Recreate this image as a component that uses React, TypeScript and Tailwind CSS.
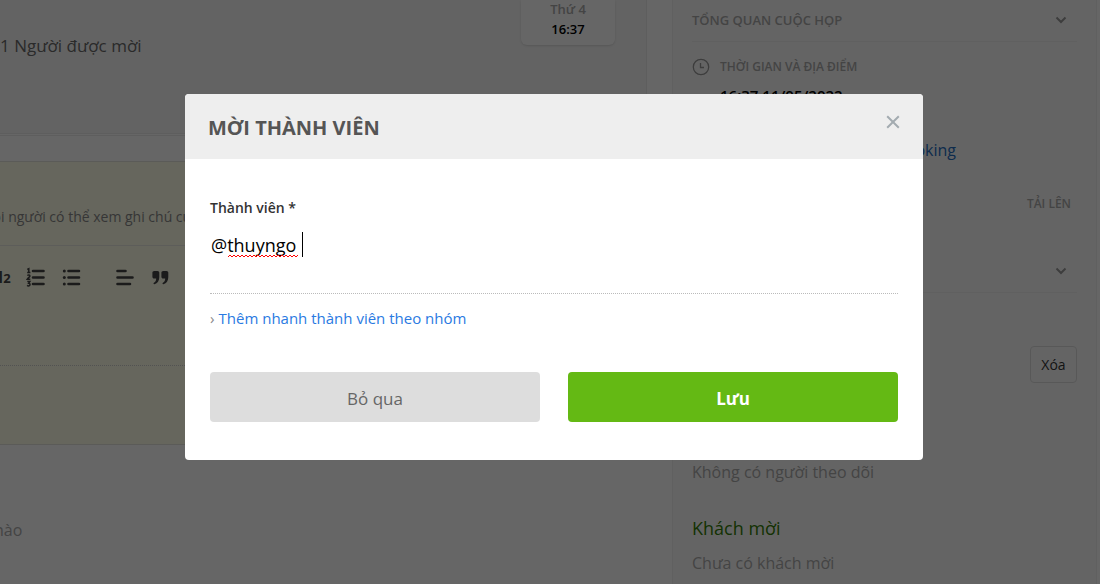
import React, { useState } from "react";

function Chevron() {
  return (
    <svg width="12" height="12" viewBox="0 0 12 12" fill="none" stroke="#999" strokeWidth="2" aria-hidden="true">
      <path d="M1.500 3.500 6 8l4.500-4.500" />
    </svg>
  );
}

function ClockIcon() {
  return (
    <svg width="18" height="18" viewBox="0 0 18 18" fill="none" stroke="#999" strokeWidth="1.300" aria-hidden="true">
      <circle cx="9" cy="9" r="7.700" />
      <path d="M8.500 5v4.500H12" />
    </svg>
  );
}

function NumberedListIcon() {
  return (
    <svg width="20" height="20" viewBox="0 0 20 20" fill="none" stroke="#444" aria-hidden="true">
      <path d="M7 4h10.500M7 10.500h10.500M7 17h10.500" strokeWidth="2.600" strokeLinecap="round" />
      <path
        d="M1.300 2.500 2.800 1.800V5.500M1.200 5.500h3.200M1.300 8.500c1-.8 2.600-.6 2.600.5 0 .9-1.500 1.500-2.600 3.200h3M1.300 14.600h2.500L2.700 16.300c1.800 0 1.800 2.600 0 2.600-.6 0-1.200-.1-1.600-.5"
        strokeWidth="1.500"
      />
    </svg>
  );
}

function BulletListIcon() {
  return (
    <svg width="20" height="20" viewBox="0 0 20 20" fill="#444" stroke="#444" aria-hidden="true">
      <path d="M6.500 4h10.500M6.500 10.500h10.500M6.500 17h10.500" strokeWidth="2.600" strokeLinecap="round" />
      <g stroke="none">
        <circle cx="2.300" cy="4" r="1.500" />
        <circle cx="2.300" cy="10.500" r="1.500" />
        <circle cx="2.300" cy="17" r="1.500" />
      </g>
    </svg>
  );
}

function AlignIcon() {
  return (
    <svg width="20" height="20" viewBox="0 0 20 20" fill="none" stroke="#444" strokeWidth="2.600" strokeLinecap="round" aria-hidden="true">
      <path d="M2.500 4h8M2.500 10.500h15M2.500 17h12.500" />
    </svg>
  );
}

function QuoteIcon() {
  return (
    <svg width="20" height="20" viewBox="0 0 20 20" fill="#444" aria-hidden="true">
      <path d="M3.200 4h3.300c1.100 0 1.800.7 1.800 1.800v3.700c0 4.200-1.700 7-4.800 7.700-.9.200-1.400-.9-.6-1.400 1.700-1.100 2.300-2.400 2.300-4.300H3.200c-1.100 0-1.800-.7-1.800-1.800V5.800C1.400 4.700 2.100 4 3.200 4zM12.200 4h3.300c1.100 0 1.800.7 1.800 1.800v3.700c0 4.200-1.700 7-4.800 7.700-.9.200-1.400-.9-.6-1.400 1.700-1.100 2.300-2.400 2.300-4.300h-2c-1.100 0-1.800-.7-1.800-1.800V5.800c0-1.100.7-1.800 1.800-1.800z" />
    </svg>
  );
}

function MeetingPage() {
  return (
    <div className="flex min-h-screen bg-white">
      <main className="min-w-0 flex-1 overflow-hidden">
        <header className="flex h-[134px] items-start justify-between border-r border-b border-[#eaeaea] bg-[#f8f8f8] pr-[31px]">
          <h2 className="pt-8 text-[17px] leading-7 text-[#6a6a6a]">1 Người được mời</h2>
          <div className="h-[45px] w-[94px] rounded-b-md bg-white text-center text-[13px] leading-5 shadow-sm">
            <div className="-mt-px font-semibold">
              <p className="text-[#aaa]">Thứ 4</p>
              <p className="text-black">16:37</p>
            </div>
          </div>
        </header>
        <div className="mt-px h-[26px] border-t border-r border-[#eaeaea]" />
        <section className="h-[284px] border-y border-[#e4e4dc] bg-[#ffffe9]">
          <p className="-ml-5 flex h-[84px] items-end border-b border-[#e8e8e0] pb-4 text-sm leading-6 whitespace-nowrap text-[#888]">
            Mọi người có thể xem ghi chú của bạn
          </p>
          <div className="-ml-[9px] flex h-[120px] items-start border-b border-dotted border-[#ccc] pt-[21px]">
            <button type="button" aria-label="H2" className="w-5 text-left text-base leading-5 font-bold text-[#444]">
              H<span className="text-[13px]">2</span>
            </button>
            <button type="button" aria-label="1 2 3" className="ml-[15px]">
              <NumberedListIcon />
            </button>
            <button type="button" aria-label="•" className="ml-4">
              <BulletListIcon />
            </button>
            <button type="button" aria-label="≡" className="ml-[33px]">
              <AlignIcon />
            </button>
            <button type="button" aria-label="”" className="ml-4">
              <QuoteIcon />
            </button>
          </div>
        </section>
        <p className="-ml-1.5 pt-[71px] text-base leading-7 text-[#aaa]">nào</p>
      </main>

      <aside className="mr-[3px] ml-[25px] w-[425px] shrink-0 border-x border-[#efefef] bg-[#fbfbfb] px-[19px]">
        <div className="flex h-[42px] items-center justify-between border-b border-[#f0f0f0] pr-2.5 pb-0.5">
          <h3 className="text-[13px] leading-5 font-semibold text-[#aaa]">TỔNG QUAN CUỘC HỌP</h3>
          <Chevron />
        </div>
        <div className="flex items-center gap-2.5 pt-[15px]">
          <ClockIcon />
          <h3 className="text-xs leading-5 font-semibold text-[#aaa]">THỜI GIAN VÀ ĐỊA ĐIỂM</h3>
        </div>
        <p className="pt-2 pl-7 text-[15px] leading-5 font-semibold text-black">16:37 11/05/2022</p>
        <p className="pt-[33px] pl-[204px] text-base leading-6 text-[#276fc0]">
          <a href="#booking">booking</a>
        </p>
        <div className="flex justify-end pt-8 pr-1.5">
          <button type="button" className="text-xs leading-5 font-semibold text-[#aaa]">
            TẢI LÊN
          </button>
        </div>
        <div className="mt-[37px] flex h-[42px] items-center justify-end border-b border-[#f0f0f0] pr-2.5 pb-0.5">
          <Chevron />
        </div>
        <div className="flex justify-end pt-[53px]">
          <button type="button" className="h-[37px] w-[47px] rounded-sm border border-[#ddd] text-sm text-[#333]">
            Xóa
          </button>
        </div>
        <p className="pt-[77px] text-base leading-6 text-[#aaa]">Không có người theo dõi</p>
        <h3 className="pt-[30px] text-lg leading-7 text-[#347e07]">Khách mời</h3>
        <p className="pt-[9px] text-base leading-6 text-[#aaa]">Chưa có khách mời</p>
      </aside>
    </div>
  );
}

function InviteDialog() {
  const [member, setMember] = useState("@thuyngo ");
  return (
    <div className="fixed inset-0 flex items-start justify-center bg-black/60 pt-[94px] pl-2">
      <form
        role="dialog"
        aria-labelledby="invite-title"
        className="w-full max-w-[738px] overflow-hidden rounded bg-white"
        onSubmit={(event) => event.preventDefault()}
      >
        <header className="flex h-[65px] items-center justify-between bg-[#eee] pt-0.5 pr-[23px] pl-[23px]">
          <h1 id="invite-title" className="text-xl leading-7 font-bold text-[#555]">
            MỜI THÀNH VIÊN
          </h1>
          <button type="button" aria-label="×" className="-mt-3">
            <svg width="14" height="14" viewBox="0 0 14 14" stroke="#a3abb0" strokeWidth="2" aria-hidden="true">
              <path d="M1.200 1.200 12.800 12.800M12.800 1.200 1.200 12.800" />
            </svg>
          </button>
        </header>
        <div className="px-[25px] pt-[37px] pb-[38px]">
          <label htmlFor="member" className="block text-sm leading-6 font-semibold text-[#333]">
            Thành viên *
          </label>
          <div className="relative border-b border-dotted border-[#bbb]">
            <textarea
              id="member"
              spellCheck={false}
              value={member}
              onChange={(event) => setMember(event.target.value)}
              className="block h-[73px] w-full resize-none pt-[11px] pl-px text-lg leading-7 text-black outline-none"
            />
            <svg className="absolute top-[34px] left-[18px]" width="70" height="4" viewBox="0 0 70 4" fill="none" stroke="#f00" aria-hidden="true">
              <path d="M0 3l2-2 2 2 2-2 2 2 2-2 2 2 2-2 2 2 2-2 2 2 2-2 2 2 2-2 2 2 2-2 2 2 2-2 2 2 2-2 2 2 2-2 2 2 2-2 2 2 2-2 2 2 2-2 2 2 2-2 2 2 2-2 2 2 2-2 2 2 2-2" />
            </svg>
            <span className="absolute top-3 left-[92px] h-[25px] w-px bg-black" />
          </div>
          <p className="flex gap-1 pt-3 text-[15px] leading-6 text-[#2a7ae2]">
            <span className="text-[#888]">›</span>
            <a href="#groups">Thêm nhanh thành viên theo nhóm</a>
          </p>
          <div className="mt-[42px] grid grid-cols-2 gap-7">
            <button type="button" className="h-[50px] rounded bg-[#ddd] pt-1 text-[17px] text-[#666]">
              Bỏ qua
            </button>
            <button type="submit" className="h-[50px] rounded bg-[#64b914] pt-1 text-[17px] font-bold text-white">
              Lưu
            </button>
          </div>
        </div>
      </form>
    </div>
  );
}

export default function App() {
  return (
    <div className="min-h-screen overflow-hidden font-['Open_Sans','Noto_Sans',sans-serif]">
      <MeetingPage />
      <InviteDialog />
    </div>
  );
}
